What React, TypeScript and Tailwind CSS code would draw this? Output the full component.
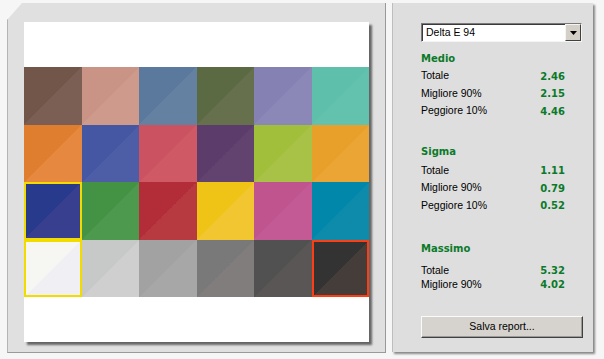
import React from 'react';

interface Swatch {
  bg: string;
  mark?: string;
}

const swatches: Swatch[] = [
  { bg: 'bg-[linear-gradient(to_bottom_right,#72564a_50%,#7b5f54_50%)]' },
  { bg: 'bg-[linear-gradient(to_bottom_right,#c99385_50%,#cd9a8c_50%)]' },
  { bg: 'bg-[linear-gradient(to_bottom_right,#5b799c_50%,#6481a1_50%)]' },
  { bg: 'bg-[linear-gradient(to_bottom_right,#5b6a43_50%,#66704c_50%)]' },
  { bg: 'bg-[linear-gradient(to_bottom_right,#8581b3_50%,#8b87b7_50%)]' },
  { bg: 'bg-[linear-gradient(to_bottom_right,#5ebfaa_50%,#63c2ae_50%)]' },

  { bg: 'bg-[linear-gradient(to_bottom_right,#df7e2e_50%,#e6883f_50%)]' },
  { bg: 'bg-[linear-gradient(to_bottom_right,#4557a3_50%,#4d5ea7_50%)]' },
  { bg: 'bg-[linear-gradient(to_bottom_right,#cb5361_50%,#cf5a66_50%)]' },
  { bg: 'bg-[linear-gradient(to_bottom_right,#5b3c6b_50%,#624370_50%)]' },
  { bg: 'bg-[linear-gradient(to_bottom_right,#a2bf3b_50%,#a7c246_50%)]' },
  { bg: 'bg-[linear-gradient(to_bottom_right,#e8a02a_50%,#eaa535_50%)]' },

  { bg: 'bg-[linear-gradient(to_bottom_right,#283a8b_50%,#393f8f_50%)]', mark: 'shadow-[inset_0_0_0_2px_#f2dc00]' },
  { bg: 'bg-[linear-gradient(to_bottom_right,#449345_50%,#4d9a4e_50%)]' },
  { bg: 'bg-[linear-gradient(to_bottom_right,#b22d37_50%,#b73a40_50%)]' },
  { bg: 'bg-[linear-gradient(to_bottom_right,#f0c317_50%,#f2c630_50%)]' },
  { bg: 'bg-[linear-gradient(to_bottom_right,#bf548f_50%,#c35a95_50%)]' },
  { bg: 'bg-[linear-gradient(to_bottom_right,#0087a9_50%,#0e8baa_50%)]' },

  { bg: 'bg-[linear-gradient(to_bottom_right,#f6f6f3_50%,#f0eff4_50%)]', mark: 'shadow-[inset_0_0_0_2px_#f2dc00]' },
  { bg: 'bg-[linear-gradient(to_bottom_right,#c7c9c9_50%,#cfcfcf_50%)]' },
  { bg: 'bg-[linear-gradient(to_bottom_right,#a1a2a1_50%,#a8a7a7_50%)]' },
  { bg: 'bg-[linear-gradient(to_bottom_right,#797979_50%,#827d7d_50%)]' },
  { bg: 'bg-[linear-gradient(to_bottom_right,#515151_50%,#5b5656_50%)]' },
  { bg: 'bg-[linear-gradient(to_bottom_right,#323332_50%,#443d39_50%)]', mark: 'shadow-[inset_0_0_0_2px_#ff3d12]' },
];

const Row = ({ label, value, tall = true }: { label: string; value: string; tall?: boolean }) => (
  <div className={`flex w-[144px] items-center justify-between ${tall ? 'h-[17.5px]' : 'h-[14px]'}`}>
    <span className="text-[10.5px] text-black">{label}</span>
    <span className="font-['DejaVu_Sans',sans-serif] text-[10px] font-bold text-[#0a7a2a]">{value}</span>
  </div>
);

const Heading = ({ children, className = '' }: { children: React.ReactNode; className?: string }) => (
  <div className={`flex h-[17.5px] items-center font-['DejaVu_Sans',sans-serif] text-[10px] font-bold text-[#0a7a2a] ${className}`}>
    {children}
  </div>
);

export default function App() {
  return (
    <div className="flex h-[359px] w-[604px] gap-[6px] bg-[#f6f6f6] pl-[7px] pt-[3px] font-['Liberation_Sans',Arial,sans-serif]">
      {/* chart panel */}
      <div className="h-[350px] w-[379px] border-b border-l border-r border-b-[#9a9a9a] border-l-[#b4b4b4] border-r-[#9a9a9a] bg-[#e0e0e0] pl-[16px] pt-[19px] [clip-path:polygon(15px_0,100%_0,100%_100%,0_100%,0_17px)]">
        <div className="flex h-[320px] w-[345px] flex-col justify-center bg-white shadow-[3px_3px_2px_rgba(0,0,0,0.55)]">
          <div className="grid grid-cols-6">
            {swatches.map((s, i) => (
              <div key={i} className={`h-[57.5px] ${s.bg} ${s.mark ?? ''}`} />
            ))}
          </div>
        </div>
      </div>

      {/* stats panel */}
      <div className="flex h-[349px] w-[201px] flex-col border-l border-[#bdbdbd] bg-[#dedede] pl-[28px] pt-[20px] shadow-[2px_2px_2px_rgba(0,0,0,0.45)]">
        <div className="flex h-[19px] w-[161px] border border-b-[#f4f4f4] border-l-[#7a7a7a] border-r-[#f4f4f4] border-t-[#7a7a7a] bg-white shadow-[inset_1px_1px_0_#3a3a3a]">
          <span className="flex flex-1 items-center pl-[4px] text-[10.5px] text-black">Delta E 94</span>
          <div className="flex h-full w-[16px] items-center justify-center border border-b-[#404040] border-l-[#f4f4f4] border-r-[#404040] border-t-[#f4f4f4] bg-[#d4d0c8]">
            <svg width="7" height="4" viewBox="0 0 7 4">
              <path d="M0 0h7L3.5 4z" fill="#000" />
            </svg>
          </div>
        </div>

        <Heading className="mt-[8px]">Medio</Heading>
        <Row label="Totale" value="2.46" />
        <Row label="Migliore 90%" value="2.15" />
        <Row label="Peggiore 10%" value="4.46" />

        <Heading className="mt-[22.5px]">Sigma</Heading>
        <div className="mt-[2px]">
          <Row label="Totale" value="1.11" />
          <Row label="Migliore 90%" value="0.79" />
          <Row label="Peggiore 10%" value="0.52" />
        </div>

        <Heading className="mt-[25.5px]">Massimo</Heading>
        <div className="mt-[6px]">
          <Row label="Totale" value="5.32" tall={false} />
          <Row label="Migliore 90%" value="4.02" tall={false} />
        </div>

        <button className="mt-[24px] flex h-[22px] w-[162px] items-center justify-center border border-b-[#404040] border-l-[#fafafa] border-r-[#404040] border-t-[#fafafa] bg-[#d6d3ce] text-[10.5px] text-black shadow-[inset_-1px_-1px_0_#9a9a9a]">
          Salva report...
        </button>
      </div>
    </div>
  );
}
